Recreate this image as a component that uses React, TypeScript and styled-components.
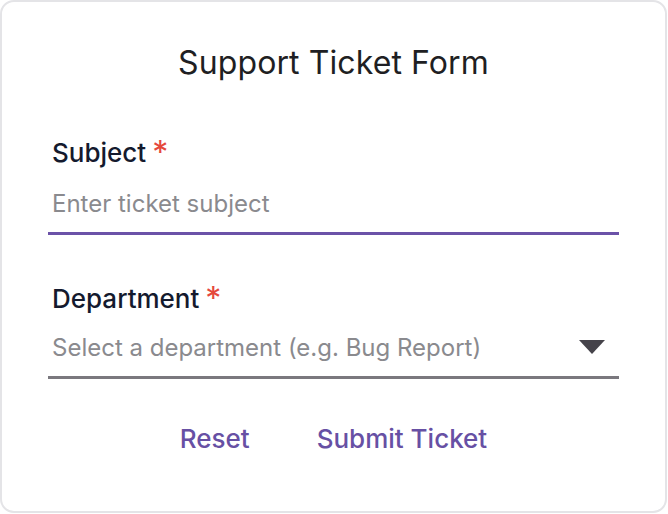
import { FC } from 'react';
import styled, { createGlobalStyle } from 'styled-components';

const GlobalStyle = createGlobalStyle`
  html, body {
    margin: 0;
    padding: 0;
    background: #ffffff;
  }
  * {
    box-sizing: border-box;
  }
`;

const Card = styled.form`
  width: 667px;
  height: 513px;
  border: 2px solid #e4e4e7;
  border-radius: 14px;
  background: #ffffff;
  padding: 41px 46px 0 46px;
  display: flex;
  flex-direction: column;
  font-family: Inter, 'Noto Sans', sans-serif;
`;

const Title = styled.h1`
  margin: 0 0 54px 0;
  font-size: 32px;
  line-height: 40px;
  font-weight: 400;
  color: #1f1f23;
  text-align: center;
  letter-spacing: 0.1px;
`;

const Field = styled.div<{ $gap?: number }>`
  display: flex;
  flex-direction: column;
  margin-bottom: ${(p) => p.$gap ?? 0}px;
`;

const Label = styled.label`
  font-size: 26px;
  line-height: 32px;
  height: 32px;
  font-weight: 500;
  color: #141a2e;
  padding-left: 4px;
`;

const Required = styled.span`
  color: #e5483c;
  font-size: 32px;
  line-height: 0;
  font-weight: 400;
  margin-left: 6px;
  vertical-align: -2px;
`;

const TextInput = styled.input`
  border: none;
  border-bottom: 3px solid #6b52a8;
  outline: none;
  background: transparent;
  font-family: inherit;
  font-size: 24px;
  line-height: 30px;
  height: 66px;
  padding: 19px 4px 14px 4px;
  color: #222;

  &::placeholder {
    color: #8a8a8e;
  }
`;

const SelectBox = styled.div`
  display: flex;
  align-items: center;
  border-bottom: 3px solid #7a787e;
  height: 64px;
  padding: 18px 4px 13px 4px;
`;

const SelectText = styled.span`
  flex: 1;
  font-size: 24px;
  line-height: 30px;
  color: #8a8a8e;
`;

const Arrow = styled.svg`
  width: 26px;
  height: 14px;
  margin-right: 10px;
  margin-top: -3px;
`;

const Actions = styled.div`
  display: flex;
  justify-content: center;
  gap: 35px;
  margin-top: 44px;
`;

const TextButton = styled.button`
  border: none;
  background: none;
  padding: 0 16px;
  font-family: inherit;
  font-size: 26px;
  line-height: 32px;
  font-weight: 500;
  color: #6750a4;
  cursor: pointer;
`;

const App: FC = () => {
  return (
    <>
      <GlobalStyle />
      <Card onSubmit={(e) => e.preventDefault()}>
        <Title>Support Ticket Form</Title>
        <Field $gap={48}>
          <Label>
            Subject<Required>*</Required>
          </Label>
          <TextInput placeholder="Enter ticket subject" />
        </Field>
        <Field>
          <Label>
            Department<Required>*</Required>
          </Label>
          <SelectBox>
            <SelectText>Select a department (e.g. Bug Report)</SelectText>
            <Arrow viewBox="0 0 26 14">
              <path d="M0 0 L26 0 L13 14 Z" fill="#45434a" />
            </Arrow>
          </SelectBox>
        </Field>
        <Actions>
          <TextButton type="reset">Reset</TextButton>
          <TextButton type="submit">Submit Ticket</TextButton>
        </Actions>
      </Card>
    </>
  );
};

export default App;
